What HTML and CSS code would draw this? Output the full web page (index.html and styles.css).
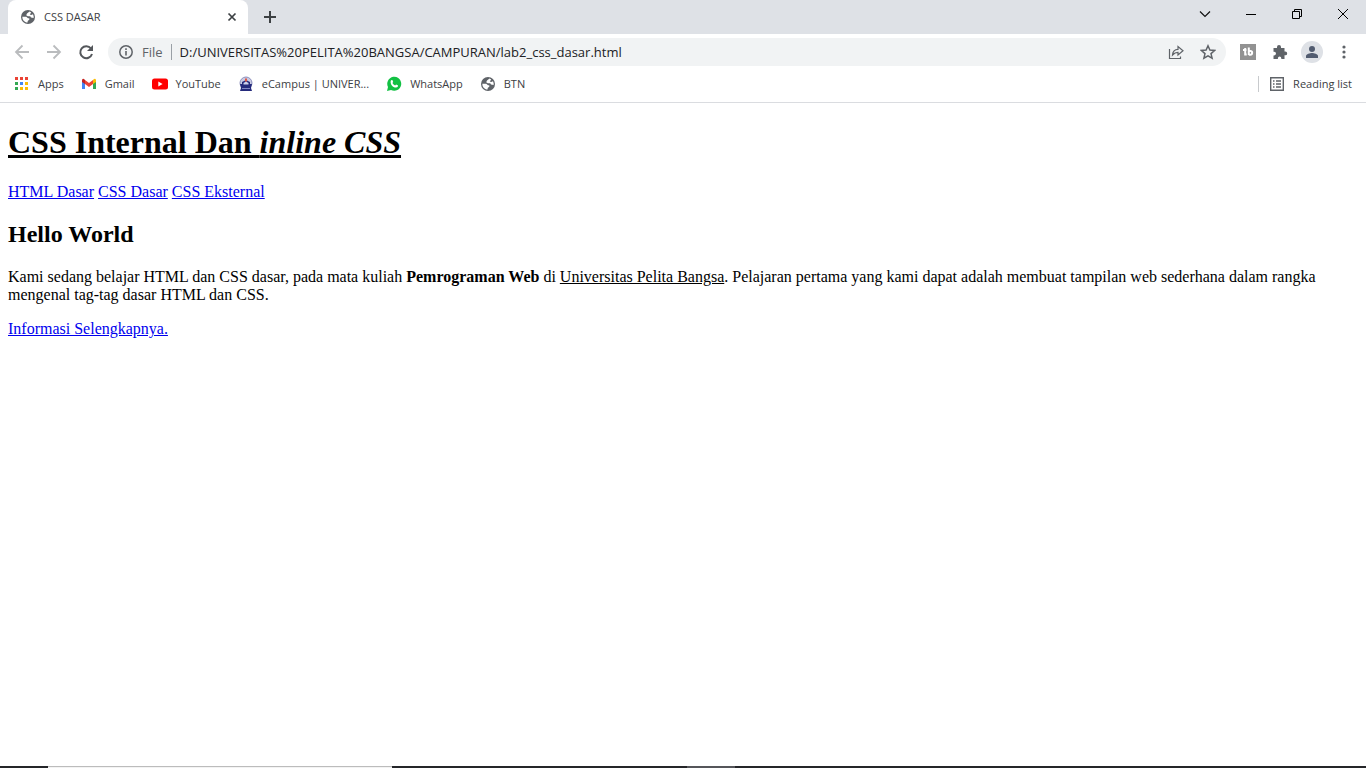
FILE: index.html
```html
<!DOCTYPE html>
<html lang="id">
<head>
<meta charset="utf-8">
<title>CSS DASAR</title>
<link rel="stylesheet" href="styles.css">
</head>
<body>
<svg class="defs" aria-hidden="true">
  <symbol id="globe" viewBox="0 0 16 16"><circle cx="8" cy="8" r="7" fill="#5f6368"/><path d="M9.500 2.400 7 4.600 6.200 6.200l1.600 1h2.400l.8 1.300 2.600.6A5.800 5.800 0 0 0 13 5.200l-1.800.9-1.400-.7 1.400-2zM2.300 7.800h4l1.700 1.400h1.300v1.600l-1.400.9-.6 2A5.700 5.700 0 0 1 2.300 7.800z" fill="#fff"/></symbol>
</svg>
<div class="window">
  <header class="chrome">
    <div class="tabs">
      <div class="tab">
        <svg class="icon"><use href="#globe"/></svg>
        <span class="tab-title">CSS DASAR</span>
        <button class="tab-close" aria-label="Close tab"><svg class="icon" viewBox="0 0 16 16"><path d="M4.500 4.500l7 7m0-7l-7 7" stroke="#3c4043" stroke-width="1.700"/></svg></button>
      </div>
      <button class="new-tab" aria-label="New tab"><svg class="icon" viewBox="0 0 16 16"><path d="M8 2v12M2 8h12" stroke="#3c4043" stroke-width="2"/></svg></button>
      <div class="controls">
        <button aria-label="Search tabs"><svg class="icon" viewBox="0 0 16 16"><path d="M3 5.500l5 5 5-5" fill="none" stroke="#111" stroke-width="1.200"/></svg></button>
        <button aria-label="Minimize"><svg class="icon" viewBox="0 0 16 16"><path d="M3 8.500h10" stroke="#000"/></svg></button>
        <button aria-label="Restore"><svg class="icon" viewBox="0 0 16 16"><path d="M3.500 5.500h7v7h-7zM5.500 5V3.500h7v7H11" fill="none" stroke="#000"/></svg></button>
        <button aria-label="Close"><svg class="icon" viewBox="0 0 16 16"><path d="M3 3l10 10m0-10L3 13" stroke="#000"/></svg></button>
      </div>
    </div>
    <div class="toolbar">
      <button aria-label="Back"><svg class="icon" viewBox="0 0 16 16"><path d="M15 8H2m6.500-6.500L2 8l6.500 6.500" fill="none" stroke="#babcbe" stroke-width="1.800"/></svg></button>
      <button aria-label="Forward"><svg class="icon" viewBox="0 0 16 16"><path d="M1 8h13M7.500 1.500L14 8l-6.500 6.500" fill="none" stroke="#babcbe" stroke-width="1.800"/></svg></button>
      <button aria-label="Reload"><svg class="icon" viewBox="0 0 16 16"><path d="M13 4.500A6 6 0 1 0 14 10" fill="none" stroke="#54575b" stroke-width="2"/><path d="M15 1v6H9z" fill="#54575b"/></svg></button>
      <div class="address">
        <svg class="icon" viewBox="0 0 16 16"><circle cx="8" cy="8" r="6.200" fill="none" stroke="#5f6368" stroke-width="1.500"/><path d="M8 7v4.500M8 4.300v1.700" stroke="#5f6368" stroke-width="1.600"/></svg>
        <span class="scheme">File</span>
        <input class="url" aria-label="Address" value="D:/UNIVERSITAS%20PELITA%20BANGSA/CAMPURAN/lab2_css_dasar.html">
        <button aria-label="Share"><svg class="icon" viewBox="0 0 16 16"><path d="M1.500 5v9.500h11V12.500M4.500 11c.3-4 2.500-5.500 5.500-5.600V2.500L15 6.800l-5 4.200V8.300C7.500 8.300 6 9.300 4.500 11z" fill="none" stroke="#5f6368" stroke-width="1.200"/></svg></button>
        <button aria-label="Bookmark"><svg class="icon" viewBox="0 0 16 16"><path d="M8 1.800l1.900 4.300 4.700.4L11 9.600l1.100 4.600L8 11.800l-4.100 2.400L5 9.600 1.400 6.500l4.700-.4z" fill="none" stroke="#5f6368" stroke-width="1.500"/></svg></button>
      </div>
      <div class="extensions">
        <button aria-label="TubeBuddy"><svg class="icon" viewBox="0 0 16 16"><path d="M0 0h16v16H0z" fill="#929292"/><path d="M3 6h3.500M5.200 4v6.500h1.500M8.800 3.500v7.500M8.800 7h1.500a1.800 1.800 0 0 1 0 3.700H8.800" fill="none" stroke="#fff" stroke-width="2"/></svg></button>
        <button aria-label="Extensions"><svg class="icon" viewBox="0 0 16 16"><path d="M1.500 4H5V3a2 2 0 0 1 4 0v1h3.500v3.500h.8a1.900 1.900 0 0 1 0 3.800h-.8V15H9.300v-.8a1.700 1.700 0 0 0-3.400 0v.8H1.500v-3.600h.7a1.800 1.800 0 0 0 0-3.600h-.7z" fill="#5f6368"/></svg></button>
        <button class="avatar" aria-label="Profile"><svg class="icon" viewBox="0 0 16 16"><circle cx="8" cy="5" r="3" fill="#525c70"/><path d="M2 14v-2c0-2 4-3 6-3s6 1 6 3v2z" fill="#525c70"/></svg></button>
        <button aria-label="Menu"><svg class="icon" viewBox="0 0 16 16"><g fill="#5f6368"><circle cx="8" cy="3" r="1.600"/><circle cx="8" cy="8" r="1.600"/><circle cx="8" cy="13" r="1.600"/></g></svg></button>
      </div>
    </div>
    <nav class="bookmarks" aria-label="Bookmarks">
      <a href="#"><svg class="icon" viewBox="0 0 16 16"><path d="M1 1h3v3H1zM6 1h3v3H6zM11 1h3v3h-3z" fill="#ea4335"/><path d="M1 6h3v3H1zM1 11h3v3H1z" fill="#34a853"/><path d="M6 6h3v3H6z" fill="#4285f4"/><path d="M11 6h3v3h-3zM6 11h3v3H6zM11 11h3v3h-3z" fill="#fbbc05"/></svg>Apps</a>
      <a href="#"><svg class="icon" viewBox="0 0 16 16"><path d="M1 4v9h3V6z" fill="#4285f4"/><path d="M15 4v9h-3V6z" fill="#34a853"/><path d="M12 4l1-1q2-1 2 1.500V6l-3 2z" fill="#fbbc04"/><path d="M4 4L3 3Q1 2.200 1 4.500V6l3 2z" fill="#c5221f"/><path d="M4 4l4 3 4-3v4l-4 3-4-3z" fill="#ea4335"/></svg>Gmail</a>
      <a href="#"><svg class="icon" viewBox="0 0 16 16"><rect y="2.500" width="16" height="11" rx="2.500" fill="#f00"/><path d="M6.300 5.500v5l4.300-2.500z" fill="#fff"/></svg>YouTube</a>
      <a href="#"><svg class="icon" viewBox="0 0 16 16"><circle cx="8" cy="7" r="6" fill="#c9cbe4" stroke="#8d90bd"/><path d="M2 8h2V6l4-2 4 2v2h2l-1 4 1 3H2l1-3z" fill="#252a7c"/><path d="M5.500 7L8 5.500 10.500 7v1.500h-5z" fill="#cfd2ec"/><path d="M7 2.500h2v3H7z" fill="#df5544"/><path d="M4 12.500h8" stroke="#8288c4"/></svg>eCampus | UNIVER...</a>
      <a href="#"><svg class="icon" viewBox="0 0 16 16"><path d="M1 15l1-4A7 7 0 1 1 5 14z" fill="#12c143"/><path d="M5 4.200l1.400-.2.800 2-.8 1q1 1.800 2.700 2.500l1-1 2 .9q0 2-2 2.200C6.500 11.500 3.500 7.500 5 4.200z" fill="#fff"/></svg>WhatsApp</a>
      <a href="#"><svg class="icon"><use href="#globe"/></svg>BTN</a>
      <button class="reading"><svg class="icon" viewBox="0 0 16 16"><path d="M1.700 1.700h12.600v12.600H1.700z" fill="none" stroke="#5f6368" stroke-width="1.400"/><path d="M4 5h1.500M4 8h1.500M4 11h1.500M7 5h5M7 8h5M7 11h5" stroke="#5f6368" stroke-width="1.400"/></svg>Reading list</button>
    </nav>
  </header>
  <main class="page">
    <h1>CSS Internal Dan <i>inline CSS</i></h1>
    <nav><a href="#">HTML Dasar</a> <a href="#">CSS Dasar</a> <a href="#">CSS Eksternal</a></nav>
    <h2>Hello World</h2>
    <p>Kami sedang belajar HTML dan CSS dasar, pada mata kuliah <b>Pemrograman Web</b> di <u>Universitas Pelita Bangsa</u>. Pelajaran pertama yang kami dapat adalah membuat tampilan web sederhana dalam rangka mengenal tag-tag dasar HTML dan CSS.</p>
    <a href="#">Informasi Selengkapnya.</a>
  </main>
  <footer class="taskbar"><div class="search"></div><div class="running"></div></footer>
</div>
</body>
</html>
```
FILE: styles.css
```css
* { box-sizing: border-box; }
body { margin: 0; background: #fff; }
.defs { position: absolute; width: 0; height: 0; }
.window { min-height: 100vh; display: flex; flex-direction: column; }
.icon { width: 16px; height: 16px; flex: none; display: block; }
.chrome { font: 12px/16px "Open Sans", "Noto Sans", sans-serif; color: #3c4043; border-bottom: 1px solid #dadce0; }
.chrome button { border: 0; padding: 0; background: none; font: inherit; color: inherit; display: flex; align-items: center; justify-content: center; }

.tabs { display: flex; align-items: stretch; height: 34px; padding-left: 8px; background: linear-gradient(#dee1e6, #dee1e6); }
.tab { width: 240px; display: flex; align-items: center; gap: 8px; padding: 0 8px 0 12px; background: #fff; border-radius: 8px 8px 0 0; }
.tab-title { flex: 1; font-size: 11px; }
.new-tab { width: 28px; margin-left: 8px; }
.controls { display: flex; margin-left: auto; padding-bottom: 6px; }
.controls button { width: 46px; }

.toolbar { display: flex; align-items: center; height: 36px; padding: 0 6px; }
.toolbar > button { width: 32px; height: 28px; }
.address { flex: 1; height: 28px; display: flex; align-items: center; margin-left: 6px; padding: 0 10px; border-radius: 14px; background: #f1f3f4; }
.scheme { margin-left: 8px; padding-right: 8px; border-right: 1px solid #9aa0a6; font-size: 13px; color: #5f6368; }
.url { flex: 1; min-width: 0; border: 0; padding: 0 0 0 8px; background: none; font: 13px/20px "Open Sans", "Noto Sans", sans-serif; color: #202124; }
.address button { width: 16px; margin-left: 16px; }
.extensions { display: flex; align-items: center; margin-left: 6px; }
.extensions button { width: 32px; height: 28px; }
.extensions .avatar { width: 22px; height: 22px; margin: 0 5px; border-radius: 50%; background: #dee1e6; }

.bookmarks { display: flex; align-items: center; gap: 17px; height: 32px; padding: 0 14px 4px; font-size: 11px; }
.bookmarks a { display: flex; align-items: center; gap: 8px; color: inherit; text-decoration: none; }
.bookmarks .reading { gap: 8px; margin-left: auto; padding-left: 10px; border-left: 1px solid #c8cacd; }

.page { flex: 1; padding: 0 8px; font: 16px/18px "Liberation Serif", "Times New Roman", serif; color: #000; }
.page h1 { margin: 21px 0 22px; font-size: 32px; line-height: 37px; text-decoration: underline; }
.page h2 { margin: 20px 0; font-size: 24px; line-height: 27px; }
.page p { margin: 0 0 16px; }
.page a { color: #00e; }

.taskbar { display: flex; height: 2px; padding-left: 48px; background: #252629; }
.search { width: 344px; background: #f3f3f3; border-top: 1px solid #bcbcbc; }
.running { width: 48px; margin-left: 295px; background: #55565a; }
```
